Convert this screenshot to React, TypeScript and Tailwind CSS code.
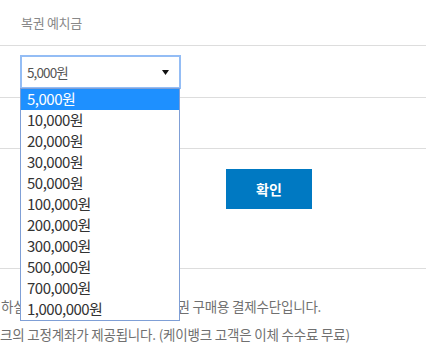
import React from 'react';

const amounts = [
  '5,000원',
  '10,000원',
  '20,000원',
  '30,000원',
  '50,000원',
  '100,000원',
  '200,000원',
  '300,000원',
  '500,000원',
  '700,000원',
  '1,000,000원',
];

const font = { fontFamily: '"Noto Sans CJK KR", "Noto Sans", sans-serif' };

export default function App() {
  const [selected] = React.useState(0);

  return (
    <div className="relative h-[344px] w-[426px] overflow-hidden bg-white" style={font}>
      <div className="flex h-[46px] items-center border-b border-[#dddddd] pl-[21px]">
        <span className="text-[13px] tracking-[-0.3px] text-[#888888]">복권 예치금</span>
      </div>

      <div className="h-[52px] border-b border-[#dddddd] pl-[20px] pt-[9px]">
        <div className="relative w-[161px]">
          <div className="flex h-[34px] items-center justify-between border-2 border-[#94bdf5] pl-[5px] pr-[10px]">
            <span className="text-[13.5px] tracking-[-0.9px] text-[#555555]">{amounts[selected]}</span>
            <svg width="7" height="5" viewBox="0 0 7 5">
              <path d="M0 0h7L3.5 5z" fill="#111111" />
            </svg>
          </div>
          <ul className="absolute left-0 top-[33px] z-10 w-[160px] border border-[#7f9fd6] bg-white">
            {amounts.map((a, i) => (
              <li
                key={a}
                className={
                  'flex h-[21px] items-center pl-[6px] text-[15px] tracking-[-0.5px] ' +
                  (i === selected ? 'bg-[#1e90ff] text-white' : 'text-[#333333]')
                }
              >
                {a}
              </li>
            ))}
          </ul>
        </div>
      </div>

      <div className="h-[51px] border-b border-[#dddddd]" />

      <div className="h-[120px] border-b border-[#dddddd] pl-[226px] pt-[20px]">
        <button className="h-[40px] w-[86px] bg-[#0079c2] text-[14px] font-bold text-white">확인</button>
      </div>

      <div className="pt-[23px] text-[13.5px] leading-[28px] tracking-[-0.2px] text-[#707070]">
        <p className="ml-[1px] whitespace-nowrap">하실 수 있는 케이뱅크 예치금, 복권 구매용 결제수단입니다.</p>
        <p className="whitespace-nowrap">크의 고정계좌가 제공됩니다. (케이뱅크 고객은 이체 수수료 무료)</p>
      </div>
    </div>
  );
}
